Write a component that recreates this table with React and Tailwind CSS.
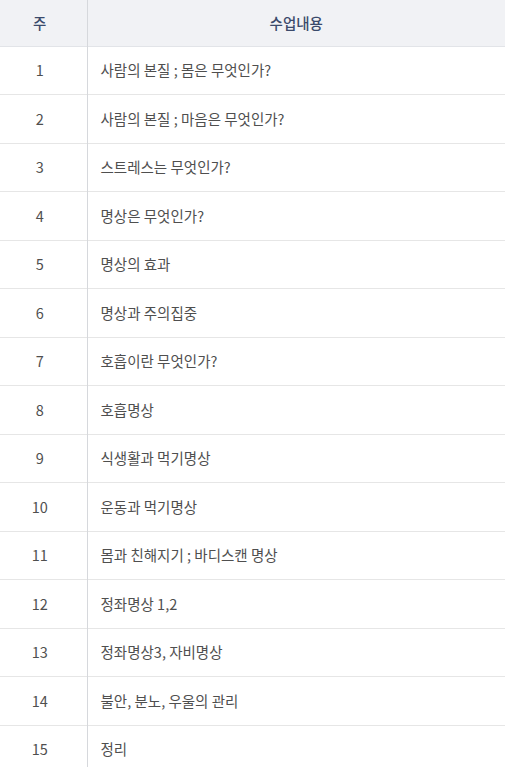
import React from 'react';

const rows = [
  '사람의 본질 ; 몸은 무엇인가?',
  '사람의 본질 ; 마음은 무엇인가?',
  '스트레스는 무엇인가?',
  '명상은 무엇인가?',
  '명상의 효과',
  '명상과 주의집중',
  '호흡이란 무엇인가?',
  '호흡명상',
  '식생활과 먹기명상',
  '운동과 먹기명상',
  '몸과 친해지기 ; 바디스캔 명상',
  '정좌명상 1,2',
  '정좌명상3, 자비명상',
  '불안, 분노, 우울의 관리',
  '정리',
];

export default function App() {
  return (
    <div className="w-[505px] h-[767px] overflow-hidden bg-white font-['Noto_Sans_CJK_KR','Noto_Sans',sans-serif] text-[14.5px]">
      <table className="w-full table-fixed border-collapse">
        <thead>
          <tr className="h-[46px] bg-[#f1f2f5] border-b border-[#e2e4e8] text-[#3b4a6b]">
            <th className="w-[87px] pr-[7px] font-medium border-r border-[#d6d8dc] text-center">주</th>
            <th className="font-medium text-center">수업내용</th>
          </tr>
        </thead>
        <tbody className="text-[#4f4f4f]">
          {rows.map((text, i) => (
            <tr key={i} className="h-[48.5px] border-b border-[#e6e6e6]">
              <td className="pr-[7px] text-center border-r border-[#d6d8dc]">{i + 1}</td>
              <td className="pl-[13px]">{text}</td>
            </tr>
          ))}
        </tbody>
      </table>
    </div>
  );
}
